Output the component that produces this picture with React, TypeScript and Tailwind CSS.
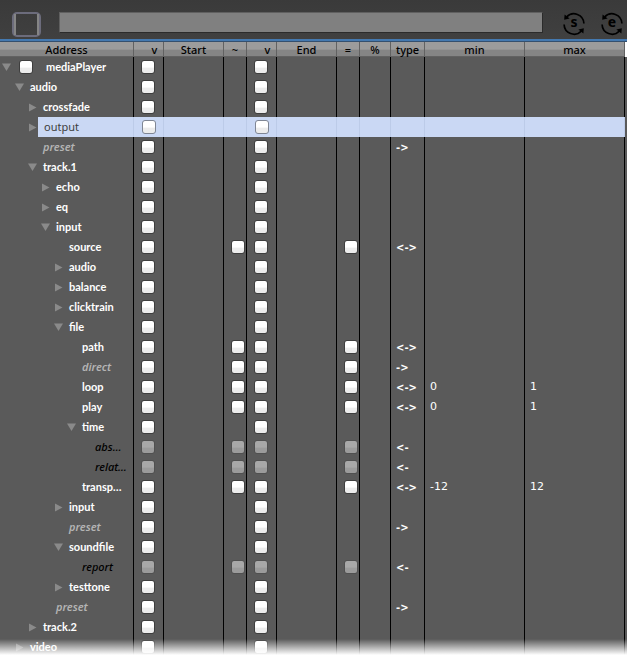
import React from "react";

type Flow = "<->" | "->" | "<-";
type Kind = "normal" | "message" | "returned";
type Item = {
  name: string;
  level: number;
  open?: boolean;
  kind?: Kind;
  flow?: Flow;
  ramp?: boolean;
  min?: string;
  max?: string;
  selected?: boolean;
};

const items: Item[] = [
  { name: "mediaPlayer", level: 0, open: true },
  { name: "audio", level: 1, open: true },
  { name: "crossfade", level: 2, open: false },
  { name: "output", level: 2, open: false, selected: true },
  { name: "preset", level: 2, kind: "message", flow: "->" },
  { name: "track.1", level: 2, open: true },
  { name: "echo", level: 3, open: false },
  { name: "eq", level: 3, open: false },
  { name: "input", level: 3, open: true },
  { name: "source", level: 4, flow: "<->", ramp: true },
  { name: "audio", level: 4, open: false },
  { name: "balance", level: 4, open: false },
  { name: "clicktrain", level: 4, open: false },
  { name: "file", level: 4, open: true },
  { name: "path", level: 5, flow: "<->", ramp: true },
  { name: "direct", level: 5, kind: "message", flow: "->", ramp: true },
  { name: "loop", level: 5, flow: "<->", ramp: true, min: "0", max: "1" },
  { name: "play", level: 5, flow: "<->", ramp: true, min: "0", max: "1" },
  { name: "time", level: 5, open: true },
  { name: "abs…", level: 6, kind: "returned", flow: "<-", ramp: true },
  { name: "relat…", level: 6, kind: "returned", flow: "<-", ramp: true },
  { name: "transp…", level: 5, flow: "<->", ramp: true, min: "-12", max: "12" },
  { name: "input", level: 4, open: false },
  { name: "preset", level: 4, kind: "message", flow: "->" },
  { name: "soundfile", level: 4, open: true },
  { name: "report", level: 5, kind: "returned", flow: "<-", ramp: true },
  { name: "testtone", level: 4, open: false },
  { name: "preset", level: 3, kind: "message", flow: "->" },
  { name: "track.2", level: 2, open: false },
  { name: "video", level: 1, open: false },
];

const nameStyle: Record<Kind, string> = {
  normal: "font-['Lato','Lucida_Grande',sans-serif] font-bold text-white",
  message: "text-[#b4b4b4] italic font-semibold",
  returned: "text-black italic font-medium",
};

function Check({ label, disabled, soft }: { label: string; disabled?: boolean; soft?: boolean }) {
  return (
    <input
      type="checkbox"
      aria-label={label}
      disabled={disabled}
      className={`block size-[14px] shrink-0 appearance-none rounded-[3px] border bg-linear-to-b from-white from-50% to-[#ececec] to-60% bg-origin-border disabled:border-[#505050] disabled:from-[#a8a8a8] disabled:to-[#9b9b9b] ${
        soft ? "border-[#7f8694]" : "border-[#3e3e3e]"
      }`}
    />
  );
}

function Disclosure({ open, name }: { open?: boolean; name: string }) {
  if (open === undefined) return <span className="w-4 shrink-0" />;
  return (
    <button
      type="button"
      aria-label={name}
      aria-expanded={open}
      className="flex w-4 shrink-0 items-center pl-[2px]"
    >
      <svg width="10" height="10" viewBox="0 0 10 10" fill="#8a8a8a">
        {open ? <path d="M0 1.5H9L4.5 9Z" /> : <path d="M1 1.5V9.5L8.5 5.5Z" />}
      </svg>
    </button>
  );
}

function CycleButton({ letter, label }: { letter: string; label: string }) {
  return (
    <button type="button" aria-label={label} className="grid size-6 place-items-center text-black">
      <svg width="24" height="24" viewBox="0 0 24 24" fill="none" stroke="#000" strokeWidth="1.7" className="col-start-1 row-start-1">
        <path d="M4.6 5A10 10 0 0 1 21.9 11.5" />
        <path d="M19.4 19A10 10 0 0 1 2.1 12.5" />
        <path d="M2.6 2.6L2.2 7.8L7.6 6.4Z" fill="#000" stroke="none" />
        <path d="M21.4 21.4L21.8 16.2L16.4 17.6Z" fill="#000" stroke="none" />
      </svg>
      <span className="col-start-1 row-start-1 -mt-1 text-[14px] leading-4 font-bold">{letter}</span>
    </button>
  );
}

const head =
  "h-[15px] border-r border-b border-[#626262] bg-linear-to-b from-[#9c9c9c] from-50% to-[#858585] to-60% px-0 pt-[2px] pb-0 text-center text-[11px] leading-3 font-medium text-black";

function Row({ item }: { item: Item }) {
  const { name, level, open, kind = "normal", flow, ramp, min, max, selected } = item;
  const off = kind === "returned";
  const cell = selected
    ? "h-5 border-r border-[#bccbe8] bg-[#cad8f4] p-0"
    : "h-5 border-r border-black p-0";
  const box = selected ? "pl-2" : "pl-[7px]";
  const value = "pl-[5px] font-['DejaVu_Sans',sans-serif] text-[11px] leading-5 font-normal text-white";
  return (
    <tr aria-selected={selected}>
      <td className={selected ? "h-5 border-r border-[#bccbe8] p-0" : cell}>
        <div className="flex h-5 items-center" style={{ paddingLeft: level * 13 }}>
          <Disclosure open={open} name={name} />
          {level === 0 && (
            <span className="mr-3 ml-[3px]">
              <Check label={`${name} active`} />
            </span>
          )}
          <span
            className={
              selected
                ? "-ml-1 h-5 flex-1 bg-[#cad8f4] pl-[6px] leading-5 font-normal text-[#404040]"
                : `pl-px leading-5 ${nameStyle[kind]}`
            }
          >
            {name}
          </span>
        </div>
      </td>
      <td className={`${cell} ${box}`}>
        <Check label={`${name} start`} disabled={off} soft={selected} />
      </td>
      <td className={cell} />
      <td className={`${cell} ${box}`}>{ramp && <Check label={`${name} ramp`} disabled={off} />}</td>
      <td className={`${cell} ${box}`}>
        <Check label={`${name} end`} disabled={off} soft={selected} />
      </td>
      <td className={cell} />
      <td className={`${cell} ${box}`}>{ramp && <Check label={`${name} repeat`} disabled={off} />}</td>
      <td className={cell} />
      <td className={`${cell} pl-[5px] font-['DejaVu_Sans',sans-serif] text-[10px] font-bold text-white`}>{flow}</td>
      <td className={`${cell} ${value}`}>{min}</td>
      <td className={`${cell} ${value}`}>{max}</td>
    </tr>
  );
}

export default function App() {
  return (
    <div className="relative bg-white pb-[2px] font-['Noto_Sans','Lucida_Grande',sans-serif] text-[11px] font-semibold">
      <header className="flex h-[39px] items-start bg-linear-to-b from-[#3a3a3a] to-[#404040] pt-3 pl-3">
        <button
          type="button"
          aria-label="Toggle panel"
          className="h-[25px] w-[29px] rounded-[5px] border-2 border-[#6c6c7c] p-0"
        >
          <span className="block h-full border-x-2 border-[#858585]" />
        </button>
        <input
          type="text"
          aria-label="Expression"
          className="ml-[18px] h-[21px] min-w-0 flex-1 border border-t-[#606060] border-r-[#2b2b2b] border-b-[#2b2b2b] border-l-[#606060] bg-[#808080] px-1 text-black outline-none"
        />
        <div className="ml-[19px] flex gap-[14px] pr-[3px]">
          <CycleButton letter="s" label="Refresh start" />
          <CycleButton letter="e" label="Refresh end" />
        </div>
      </header>
      <div className="h-[3px] border-b border-[#35506e] bg-[#4479b0]" />
      <div className="bg-[#5a5a5a]">
        <div className="bg-linear-to-b from-white from-[15px] to-[#5a5a5a] to-[15px] pr-[2px]">
          <table className="w-full table-fixed border-separate border-spacing-0 bg-[#5a5a5a]">
            <colgroup>
              <col className="w-[134px]" />
              <col className="w-[30px]" />
              <col className="w-[60px]" />
              <col className="w-[23px]" />
              <col className="w-[30px]" />
              <col className="w-[60px]" />
              <col className="w-[23px]" />
              <col className="w-[31px]" />
              <col className="w-[34px]" />
              <col />
              <col />
            </colgroup>
            <thead>
              <tr>
                <th className={head}>Address</th>
                <th className={head}><span className="pl-3">v</span></th>
                <th className={head}>Start</th>
                <th className={head}>~</th>
                <th className={head}><span className="pl-3">v</span></th>
                <th className={head}>End</th>
                <th className={head}>=</th>
                <th className={head}>%</th>
                <th className={head}>type</th>
                <th className={head}>min</th>
                <th className={head}>max</th>
              </tr>
            </thead>
            <tbody>
              {items.map((item, i) => (
                <Row key={i} item={item} />
              ))}
            </tbody>
          </table>
        </div>
      </div>
      <div className="pointer-events-none absolute inset-x-0 bottom-0 h-5 bg-linear-to-b from-transparent to-white to-80%" />
    </div>
  );
}
